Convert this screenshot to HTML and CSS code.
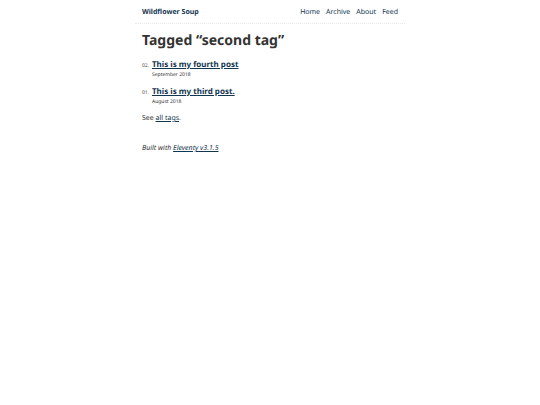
FILE: index.html
```html
<!DOCTYPE html>
<html lang="en">
<head>
<meta charset="utf-8">
<meta name="viewport" content="width=device-width, initial-scale=1">
<title>Tagged “second tag”</title>
<link rel="stylesheet" href="styles.css">
</head>
<body>
<header class="site-header">
  <a class="home-link" href="#">Wildflower Soup</a>
  <nav>
    <ul class="nav">
      <li><a href="#">Home</a></li>
      <li><a href="#">Archive</a></li>
      <li><a href="#">About</a></li>
      <li><a href="#">Feed</a></li>
    </ul>
  </nav>
</header>
<main>
  <h1>Tagged “second tag”</h1>
  <ol class="postlist">
    <li class="post"><span class="number">02.</span><a class="post-link" href="#">This is my fourth post</a><time class="post-date" datetime="2018-09">September 2018</time></li>
    <li class="post"><span class="number">01.</span><a class="post-link" href="#">This is my third post.</a><time class="post-date" datetime="2018-08">August 2018</time></li>
  </ol>
  <p class="see-all">See <a href="#">all tags</a>.</p>
</main>
<footer class="site-footer">
  <p>Built with <a href="#">Eleventy v3.1.5</a></p>
</footer>
</body>
</html>
```
FILE: styles.css
```css
* { box-sizing: border-box; }
body {
  margin: 0 auto;
  max-width: 270px;
  font-family: "Noto Sans", sans-serif;
  font-size: 7px;
  line-height: 9px;
  text-rendering: geometricPrecision;
  color: #333;
  background: #fff;
}
a { color: #123550; }
p { margin: 0; }
.site-header {
  display: flex;
  align-items: center;
  justify-content: space-between;
  padding: 8px 7px 6px;
  border-bottom: 1px dotted #e8e8e8;
}
.home-link { font-weight: 700; text-decoration: none; }
.nav { display: flex; gap: 6px; margin: 0; padding: 0; list-style: none; }
.nav a { text-decoration: none; }
main { padding: 7px; }
h1 { margin: 0 0 8px; font-size: 14px; line-height: 20px; }
.postlist {
  display: grid;
  gap: 6px;
  margin: 0 0 7px;
  padding: 0;
  list-style: none;
}
.post {
  display: grid;
  grid-template-columns: 10px 1fr;
  align-items: baseline;
}
.number { font-size: 5px; line-height: 6px; color: #444; }
.post-link { justify-self: start; font-size: 8px; line-height: 11px; font-weight: 700; }
.post-date { grid-column: 2; font-size: 5px; line-height: 10px; }
.site-footer { padding: 14px 7px 7px; font-style: italic; }
```
